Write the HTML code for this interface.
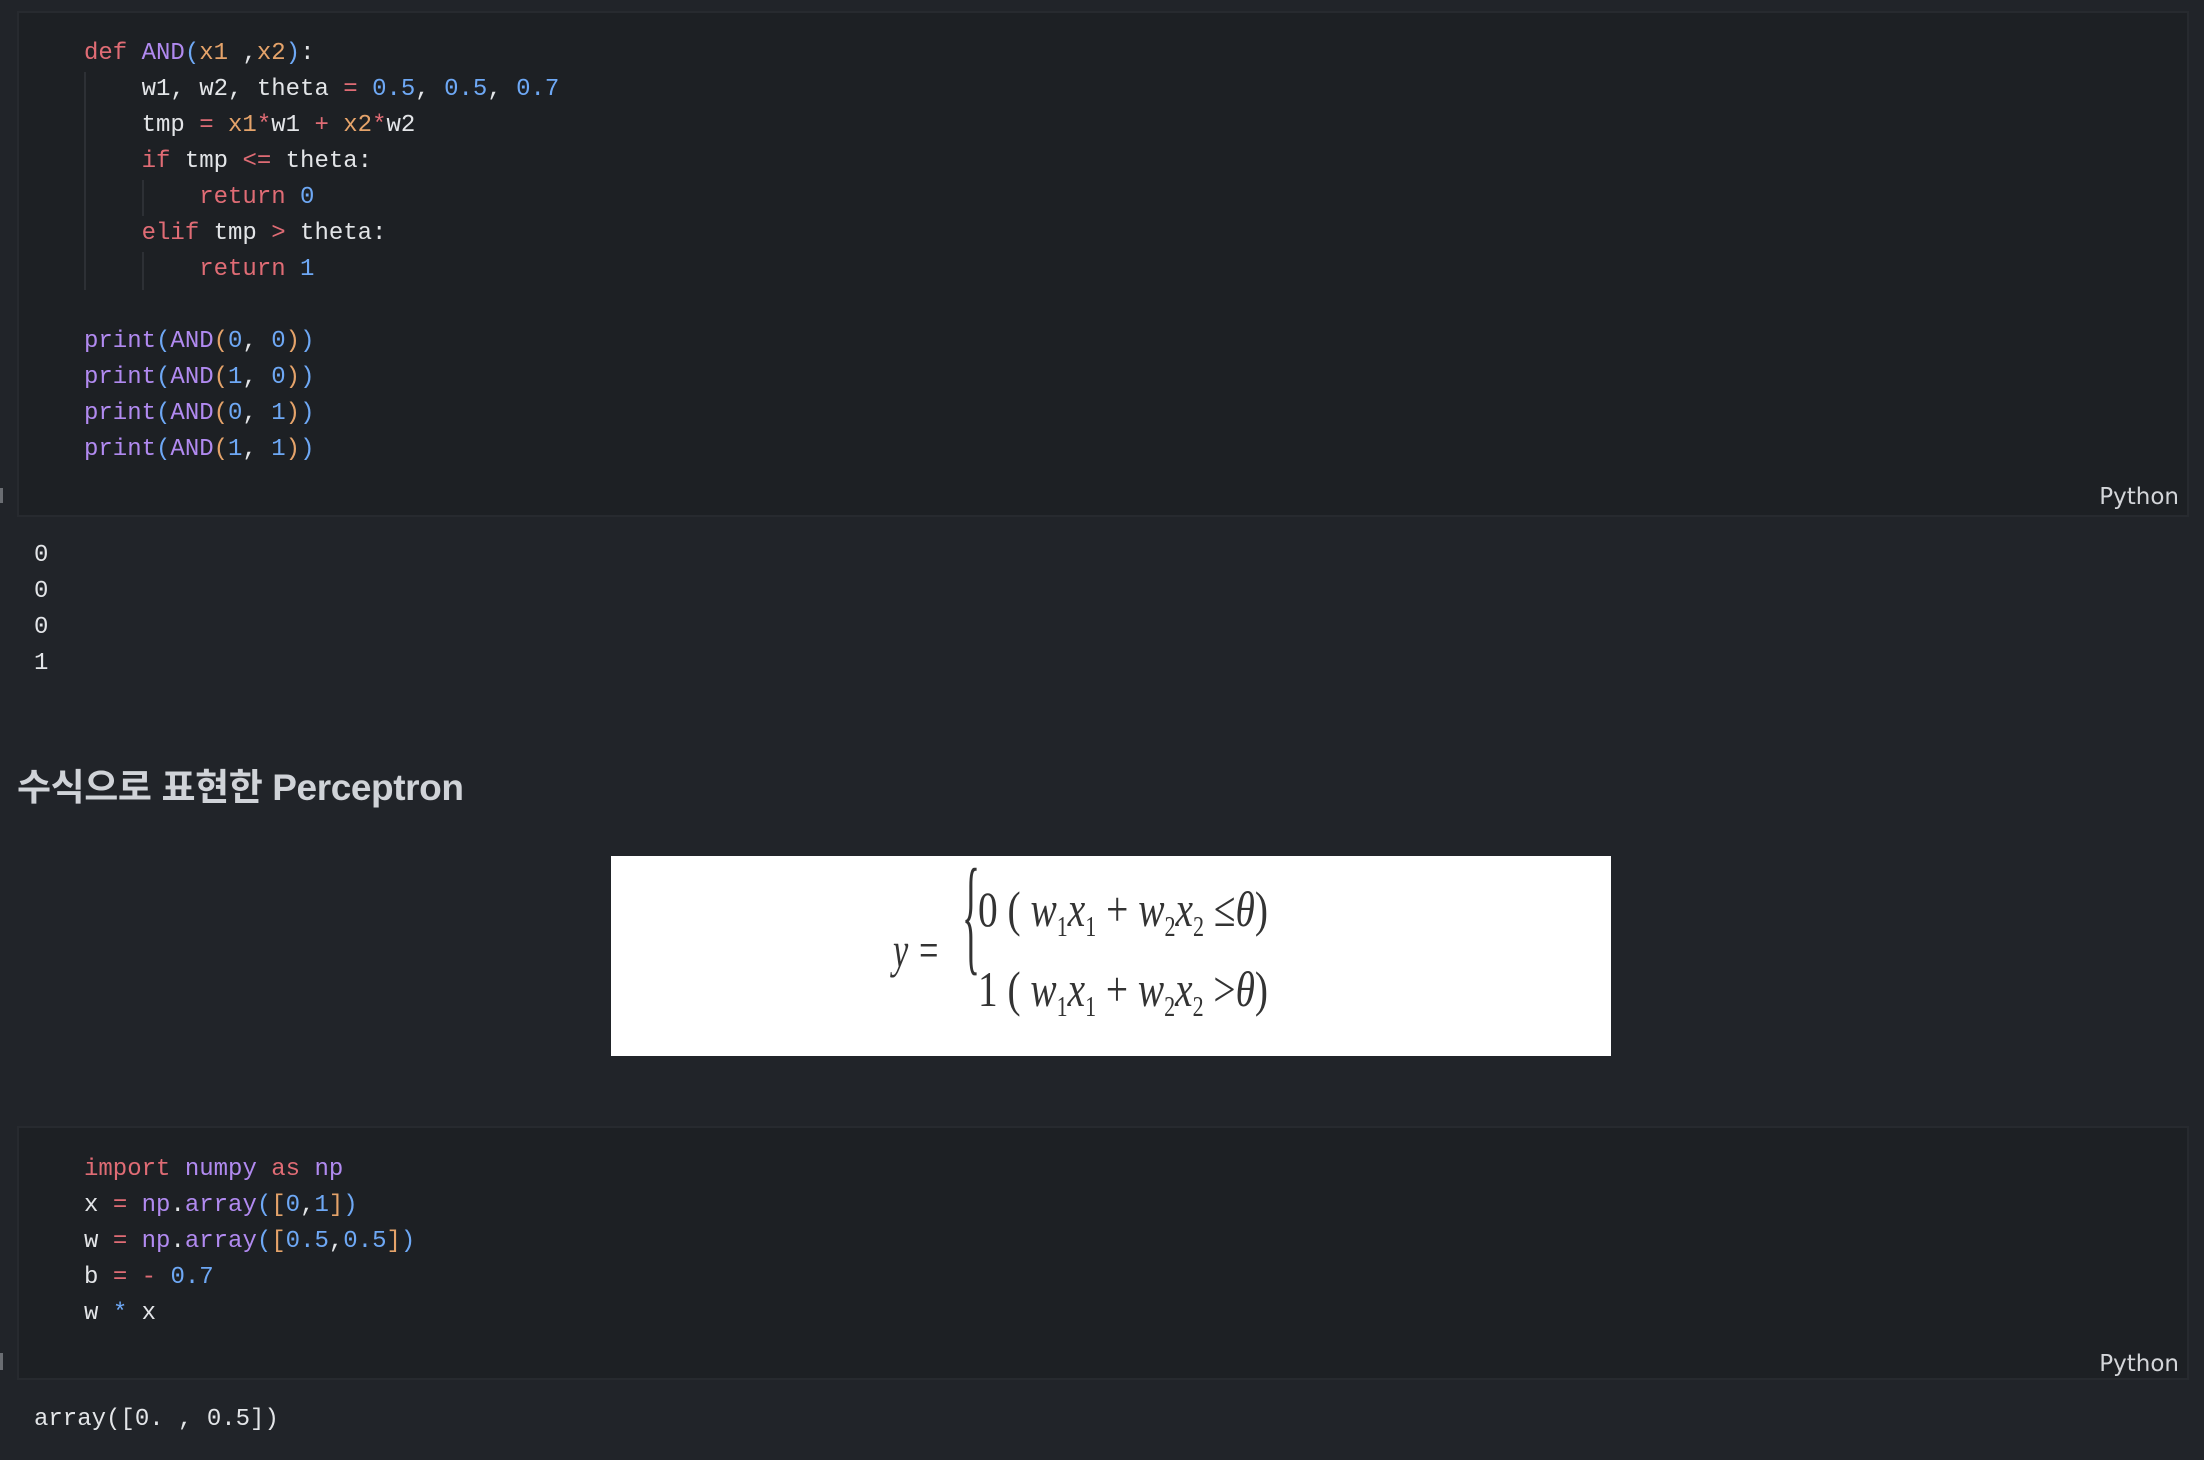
<!DOCTYPE html>
<html><head><meta charset="utf-8"><style>
*{margin:0;padding:0;box-sizing:border-box}
body{width:2204px;height:1460px;background:#212429;position:relative;overflow:hidden;font-family:"Liberation Mono",monospace;color:#e3e5e8}
.cell{position:absolute;left:17px;width:2172px;background:#1d2024;border:2px solid #272a2f}
.code{position:absolute;left:84px;font-size:24px;line-height:36px;white-space:pre;color:#e3e5e8}
.r{color:#e06c75}.p{color:#b18af0}.b{color:#6ea8f5}.o{color:#e5a36a}
.lang{position:absolute;right:8px;font-family:"DejaVu Sans","Liberation Sans",sans-serif;font-size:23px;color:#d4d6da}
.guide{position:absolute;width:2px;background:#2d3035}
.mark{position:absolute;left:0;width:3px;background:#6a6d72}
.out{position:absolute;left:34px;font-size:24px;line-height:36px;white-space:pre;color:#e3e5e8}
h2{position:absolute;left:17px;top:757px;font-family:"Liberation Sans","Noto Sans CJK KR",sans-serif;font-size:37px;font-weight:bold;color:#d0d3d8;letter-spacing:-0.4px}
</style></head><body>
<div class="cell" style="top:11px;height:506px">
<div class="guide" style="left:65px;top:59px;height:218px"></div>
<div class="guide" style="left:123px;top:167px;height:36px"></div>
<div class="guide" style="left:123px;top:239px;height:38px"></div>
<div class="lang" style="top:471px">Python</div>
</div>
<div class="code" style="top:36px"><span class="r">def</span> <span class="p">AND</span><span class="b">(</span><span class="o">x1</span> ,<span class="o">x2</span><span class="b">)</span>:
    w1, w2, theta <span class="r">=</span> <span class="b">0.5</span>, <span class="b">0.5</span>, <span class="b">0.7</span>
    tmp <span class="r">=</span> <span class="o">x1</span><span class="r">*</span>w1 <span class="r">+</span> <span class="o">x2</span><span class="r">*</span>w2
    <span class="r">if</span> tmp <span class="r">&lt;=</span> theta:
        <span class="r">return</span> <span class="b">0</span>
    <span class="r">elif</span> tmp <span class="r">&gt;</span> theta:
        <span class="r">return</span> <span class="b">1</span>

<span class="p">print</span><span class="b">(</span><span class="p">AND</span><span class="o">(</span><span class="b">0</span>, <span class="b">0</span><span class="o">)</span><span class="b">)</span>
<span class="p">print</span><span class="b">(</span><span class="p">AND</span><span class="o">(</span><span class="b">1</span>, <span class="b">0</span><span class="o">)</span><span class="b">)</span>
<span class="p">print</span><span class="b">(</span><span class="p">AND</span><span class="o">(</span><span class="b">0</span>, <span class="b">1</span><span class="o">)</span><span class="b">)</span>
<span class="p">print</span><span class="b">(</span><span class="p">AND</span><span class="o">(</span><span class="b">1</span>, <span class="b">1</span><span class="o">)</span><span class="b">)</span></div>
<div class="mark" style="top:488px;height:15px"></div>
<div class="out" style="top:538px">0
0
0
1</div>
<h2>수식으로 표현한 Perceptron</h2>
<div style="position:absolute;left:611px;top:856px;width:1000px;height:200px;background:#fff"></div>
<svg style="position:absolute;left:0;top:0" width="2204" height="1460">
<g font-family="Liberation Serif,serif" fill="#333">
<text x="893" y="967" font-size="50" font-style="italic" textLength="47" lengthAdjust="spacingAndGlyphs">y =</text>
<text x="962" y="958" font-size="130" textLength="18" lengthAdjust="spacingAndGlyphs" font-weight="100">{</text>
<text x="978" y="926" font-size="50" textLength="290" lengthAdjust="spacingAndGlyphs">0 ( <tspan font-style="italic">w</tspan><tspan font-size="28" dy="10">1</tspan><tspan font-style="italic" dy="-10">x</tspan><tspan font-size="28" dy="10">1</tspan><tspan dy="-10"> + </tspan><tspan font-style="italic">w</tspan><tspan font-size="28" dy="10">2</tspan><tspan font-style="italic" dy="-10">x</tspan><tspan font-size="28" dy="10">2</tspan><tspan dy="-10"> ≤</tspan><tspan font-style="italic">θ</tspan>)</text>
<text x="978" y="1006" font-size="50" textLength="290" lengthAdjust="spacingAndGlyphs">1 ( <tspan font-style="italic">w</tspan><tspan font-size="28" dy="10">1</tspan><tspan font-style="italic" dy="-10">x</tspan><tspan font-size="28" dy="10">1</tspan><tspan dy="-10"> + </tspan><tspan font-style="italic">w</tspan><tspan font-size="28" dy="10">2</tspan><tspan font-style="italic" dy="-10">x</tspan><tspan font-size="28" dy="10">2</tspan><tspan dy="-10"> &gt;</tspan><tspan font-style="italic">θ</tspan>)</text>
</g></svg>
<div class="cell" style="top:1126px;height:254px">
<div class="lang" style="top:223px">Python</div>
</div>
<div class="code" style="top:1152px"><span class="r">import</span> <span class="p">numpy</span> <span class="r">as</span> <span class="p">np</span>
x <span class="r">=</span> <span class="p">np</span>.<span class="p">array</span><span class="b">(</span><span class="o">[</span><span class="b">0</span>,<span class="b">1</span><span class="o">]</span><span class="b">)</span>
w <span class="r">=</span> <span class="p">np</span>.<span class="p">array</span><span class="b">(</span><span class="o">[</span><span class="b">0.5</span>,<span class="b">0.5</span><span class="o">]</span><span class="b">)</span>
b <span class="r">=</span> <span class="r">-</span> <span class="b">0.7</span>
w <span class="b">*</span> x</div>
<div class="mark" style="top:1353px;height:17px"></div>
<div class="out" style="top:1402px">array([0. , 0.5])</div>
</body></html>
